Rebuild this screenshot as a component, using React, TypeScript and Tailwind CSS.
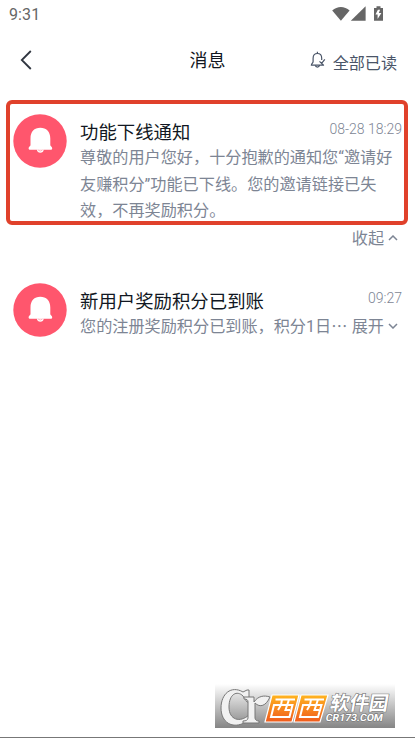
import type { ReactNode } from "react";

function BellBadge() {
  return (
    <svg className="mt-[10px] size-[54px] shrink-0" viewBox="0 0 54 54">
      <circle cx="27" cy="27" r="26.7" fill="#ff566d" />
      <path
        d="M17.5 33.8V24.5C17.5 17.8 21.3 13.8 27.3 13.8S37.3 17.8 37.3 24.5V31.2C37.3 32 39.2 32.6 39.2 34.2C39.2 35.2 38.6 35.7 37.6 35.7H17.4C16.2 35.7 15.6 35.2 15.6 34.2C15.6 32.6 17.5 32 17.5 31.2Z"
        fill="#fff"
      />
      <path d="M23.8 35.5C24.2 37.8 25.4 38.8 27.3 38.8S30.4 37.8 30.8 35.5Z" fill="#fff" />
      <path d="M25.2 36.2q2.1 1.6 4.2 0" fill="none" stroke="#ff9aa8" strokeWidth="0.8" />
    </svg>
  );
}

function StatusBar() {
  return (
    <div className="flex h-[28px] items-center justify-between pr-[30px] pl-[9px] text-[#666]">
      <span className="pt-[2px] text-[16px] leading-[26px] tracking-[0.1px]">9:31</span>
      <svg className="h-[16px] w-[54px]" viewBox="0 0 54 16" fill="#666">
        <path d="M1.2 4.6C6.2 -0.3 13.6 -0.3 18.6 4.6L9.9 14.8Z" />
        <path d="M19.8 14.8 34.6 0.3V14.8Z" />
        <path d="M43 2h2.5V0.2h4V2H52v12.8h-9Z" />
        <path d="m46.9 3.8-2.4 4.8h2.1V13l3.8-6h-2.6l1.3-3.2Z" fill="#fff" />
      </svg>
    </div>
  );
}

function Header() {
  return (
    <header className="grid h-[64px] grid-cols-[1fr_auto_1fr] items-center pr-[18px] pl-[18px]">
      <svg className="ml-[2px] h-[20px] w-[12px]" viewBox="0 0 12 20" fill="none" stroke="#303640" strokeWidth="1.8">
        <path d="M10.8 1 1.8 10l9 9" />
      </svg>
      <h1 className="pt-[2px] text-[18px] leading-[26px] text-[#111722]">消息</h1>
      <button className="flex items-center justify-end text-[16.1px] leading-[24px] text-[#4a5568]">
        <svg className="mr-[7px] h-[18px] w-[16px]" viewBox="0 0 16 18" fill="none" stroke="#4a5568" strokeWidth="1.2">
          <path d="M9 14.2H1.4C1.4 12.6 3.1 12.3 3.1 10.5V7.2C3.1 4.3 4.7 2.5 7.4 2.5S11.7 4.3 11.7 7.2V9" />
          <path d="M7.4 2.5V.8M5.3 14.4C5.7 16.6 9.1 16.6 9.5 14.4M9.5 10.4l2.1 2 3.2-4M11.7 12.4c.2.9 1.8.9 1.8 1.8H9" />
        </svg>
        <span className="pt-[7px]">全部已读</span>
      </button>
    </header>
  );
}

function Chevron({ up = false }: { up?: boolean }) {
  return (
    <svg className="mb-[2px] ml-[4px] h-[6px] w-[10px]" viewBox="0 0 10 6" fill="none" stroke="#7d8594" strokeWidth="1.5">
      <path d={up ? "M1 5l4-4 4 4" : "M1 1l4 4 4-4"} />
    </svg>
  );
}

function Message({ title, time, children }: { title: string; time: string; children: ReactNode }) {
  return (
    <div className="flex pl-[3px]">
      <BellBadge />
      <div className="ml-[13px] min-w-0 flex-1 pt-[15px]">
        <div className="flex h-[26px] items-start justify-between pr-[2px]">
          <h2 className="pt-px text-[18.4px] leading-[26px] text-[#111722]">{title}</h2>
          <time className="text-[14px] leading-[20px] font-light text-[#7d8594]">{time}</time>
        </div>
        {children}
      </div>
    </div>
  );
}

function SiteMark() {
  return (
    <svg className="h-[44px] w-[180px]" viewBox="0 0 180 44">
      <defs>
        <linearGradient id="plate" x1="0" y1="0" x2="0" y2="1">
          <stop offset="0" stopColor="#fff" />
          <stop offset="1" stopColor="#858585" />
        </linearGradient>
        <linearGradient id="tile" x1="0" y1="0" x2="0" y2="1">
          <stop offset="0" stopColor="#ffb51f" />
          <stop offset="1" stopColor="#f05a1c" />
        </linearGradient>
      </defs>
      <rect width="180" height="44" fill="url(#plate)" />
      {/* ring, stem and leaf */}
      <g stroke="#777" strokeWidth="1" fill="#f1f1f1">
        <path d="M28 8C16 1 6 10 6 24S17 46 31 38L34 36V31C25 39 14 36 14 23S22 6 28 12L32 18H34V6H32Z" />
        <path d="M29 13H39V18C43 12 49 11 55 13C51 22 45 24 40 19V34C40 36 42 37 44 37V39H28V37C31 37 33 36 33 34V18C33 16 32 15 29 15Z" />
      </g>
      <path d="M57 11H84L77 38H50ZM86 11H113L105 38H79Z" fill="url(#tile)" stroke="#fff" strokeWidth="1.2" />
      <g fill="none" stroke="#fff" strokeWidth="2">
        <path d="M60.5 15.5H80M59 21H77.5L74.5 33H56ZM67 15.5L66 21L63 26M74 15.5L70.5 26H75" />
        <path d="M89.5 15.5H109M88 21H106.5L103 33H85ZM96 15.5L95 21L92 26M103 15.5L99.5 26H104" />
      </g>
      <g
        transform="skewX(-10)"
        fill="#fff"
        stroke="#777"
        strokeWidth="1.2"
        paintOrder="stroke"
        fontWeight="700"
      >
        <text x="119" y="26.5" fontSize="19.5" textLength="58" lengthAdjust="spacingAndGlyphs">软件园</text>
        <text x="117" y="37.5" fontSize="10" textLength="57" lengthAdjust="spacingAndGlyphs">CR173.COM</text>
      </g>
    </svg>
  );
}

export default function App() {
  return (
    <div className="flex h-[738px] w-[415px] flex-col overflow-hidden bg-white font-[Roboto,'Noto_Sans_CJK_SC',sans-serif]">
      <StatusBar />
      <Header />

      <main className="flex-1 px-[6px] pt-[8px]">
        <section>
          <div className="h-[125px] w-[402px] rounded-[6px] border-4 border-[#e0412b]">
            <Message title="功能下线通知" time="08-28 18:29">
              <p className="text-[16.15px] leading-[26.5px] whitespace-nowrap text-[#7d8594]">
                尊敬的用户您好，十分抱歉的通知您“邀请好
                <br />
                友赚积分”功能已下线。您的邀请链接已失
                <br />
                效，不再奖励积分。
              </p>
            </Message>
          </div>
          <div className="flex h-[27px] items-center justify-end pt-px pr-[11px] text-[16.1px] text-[#7d8594]">
            收起
            <Chevron up />
          </div>
        </section>

        <section className="mt-[17px] w-[402px] border-4 border-transparent">
          <Message title="新用户奖励积分已到账" time="09:27">
            <div className="flex items-center pr-[6px] text-[16.15px] leading-[25px] whitespace-nowrap text-[#7d8594]">
              <span>您的注册奖励积分已到账，积分1日⋯</span>
              <span className="ml-auto">展开</span>
              <Chevron />
            </div>
          </Message>
        </section>
      </main>

      <footer className="flex h-[54px] items-start border-b border-[#777] pl-[215px]">
        <SiteMark />
      </footer>
    </div>
  );
}
